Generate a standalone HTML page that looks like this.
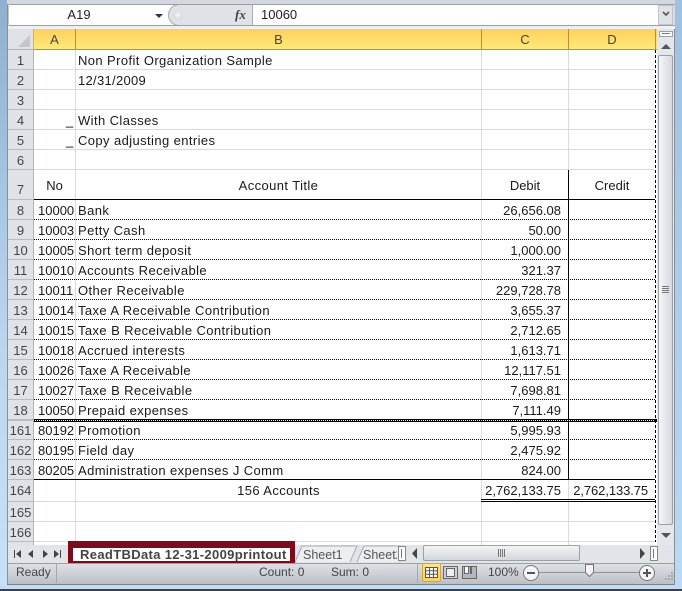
<!DOCTYPE html>
<html><head><meta charset="utf-8"><style>
html,body{margin:0;padding:0;background:#fff}
#p{position:relative;width:682px;height:591px;overflow:hidden;background:#d9dde3;font-family:"Liberation Sans",sans-serif;font-size:13px;color:#1a1a1a}
#p div{position:absolute;box-sizing:border-box}
.t{white-space:nowrap;line-height:20px;height:20px}
.r{text-align:right}
.c{text-align:center}
.b{letter-spacing:.4px}
.n{left:8px;width:25px;text-align:center;color:#444;white-space:nowrap;line-height:20px;height:20px}
.h{top:30px;height:20px;text-align:center;line-height:20px;color:#444}
</style></head><body><div id="p">
<!-- window frame -->
<div style="left:0;top:0;width:7px;height:591px;background:linear-gradient(#8fb0d0,#bcd6f0 60%,#c8e0f8)"></div>
<div style="left:675px;top:0;width:7px;height:591px;background:linear-gradient(#9fc0e0,#bcd9f5)"></div>
<div style="left:7px;top:0;width:668px;height:4px;background:#d4d8de"></div>
<div style="left:7px;top:4px;width:668px;height:1px;background:#9aa0a6"></div>
<!-- formula bar -->
<div style="left:9px;top:5px;width:664px;height:20px;background:#fff"></div>
<div class="t c" style="left:9px;top:5px;width:140px;color:#222">A19</div>
<div style="left:155px;top:14px;width:0;height:0;border-left:4px solid transparent;border-right:4px solid transparent;border-top:4px solid #333"></div>
<div style="left:168px;top:4px;width:85px;height:22px;background:#dfe3e8;border-radius:11px 0 0 11px;border-left:1px solid #a5a9ae;border-top:1px solid #9aa0a6;border-bottom:1px solid #9aa0a6;border-right:1px solid #a9adb2"></div>
<div style="left:173px;top:10px;width:10px;height:10px;border-radius:5px;background:radial-gradient(#f4f5f7,#c9ccd1)"></div>
<div class="t" style="left:235px;top:5px;font:italic bold 13px 'Liberation Serif',serif;line-height:20px;color:#444">fx</div>
<div class="t" style="left:261px;top:5px;color:#222">10060</div>
<div style="left:658px;top:5px;width:15px;height:20px;background:#dfe3e8;border:1px solid #c0c4c9"></div>
<svg style="position:absolute;left:662px;top:11px" width="8" height="6"><path d="M1 1l3 3 3-3" fill="none" stroke="#555" stroke-width="1.6"/></svg>
<div style="left:7px;top:25px;width:668px;height:1px;background:#9aa0a6"></div>
<div style="left:7px;top:26px;width:668px;height:3px;background:#eef0f3"></div>
<div style="left:7px;top:4px;width:2px;height:22px;background:#c6cad0"></div>
<!-- grid background -->
<div style="left:8px;top:29px;width:649px;height:516px;background:#fff"></div>
<div style="left:7px;top:4px;width:1px;height:580px;background:#8a8f96"></div>
<!-- row header -->
<div style="left:8px;top:50px;width:26px;height:495px;background:#dfe3e8"></div>
<div style="left:33px;top:50px;width:1px;height:495px;background:#b0b4ba"></div>
<div style="left:8px;top:29px;width:26px;height:21px;background:#dfe3e8;border-bottom:1px solid #b0b4ba;border-right:1px solid #b0b4ba"></div>
<svg style="position:absolute;left:18px;top:35px" width="12" height="12"><path d="M12 0v12H0z" fill="#c2c6cb"/></svg>
<!-- col header -->
<div style="left:34px;top:29px;width:623px;height:21px;background:linear-gradient(#fdd05e,#ffea78);border-bottom:1px solid #c28e2c"></div>
<div style="left:75px;top:29px;width:1px;height:21px;background:#c28e2c"></div>
<div style="left:481px;top:29px;width:1px;height:21px;background:#c28e2c"></div>
<div style="left:568px;top:29px;width:1px;height:21px;background:#c28e2c"></div>
<div style="left:655px;top:29px;width:1px;height:21px;background:#c28e2c"></div>
<!-- svg grid lines -->
<svg style="position:absolute;left:0;top:0" width="682" height="591">
<g fill="#b8bcc2">
<rect x="8" y="69" width="25" height="1"/><rect x="8" y="89" width="25" height="1"/><rect x="8" y="109" width="25" height="1"/><rect x="8" y="129" width="25" height="1"/><rect x="8" y="149" width="25" height="1"/><rect x="8" y="169" width="25" height="1"/><rect x="8" y="199" width="25" height="1"/><rect x="8" y="219" width="25" height="1"/><rect x="8" y="239" width="25" height="1"/><rect x="8" y="259" width="25" height="1"/><rect x="8" y="279" width="25" height="1"/><rect x="8" y="299" width="25" height="1"/><rect x="8" y="319" width="25" height="1"/><rect x="8" y="339" width="25" height="1"/><rect x="8" y="359" width="25" height="1"/><rect x="8" y="379" width="25" height="1"/><rect x="8" y="399" width="25" height="1"/><rect x="8" y="419" width="25" height="2"/><rect x="8" y="439" width="25" height="1"/><rect x="8" y="459" width="25" height="1"/><rect x="8" y="479" width="25" height="1"/><rect x="8" y="501" width="25" height="1"/><rect x="8" y="521" width="25" height="1"/><rect x="8" y="541" width="25" height="1"/>
</g>
<g fill="#d9d9d9">
<rect x="34" y="69" width="621" height="1"/><rect x="34" y="89" width="621" height="1"/><rect x="34" y="109" width="621" height="1"/><rect x="34" y="129" width="621" height="1"/><rect x="34" y="149" width="621" height="1"/><rect x="34" y="169" width="621" height="1"/><rect x="34" y="501" width="621" height="1"/><rect x="34" y="521" width="621" height="1"/><rect x="34" y="541" width="621" height="1"/>
<rect x="75" y="50" width="1" height="495"/><rect x="481" y="50" width="1" height="495"/><rect x="568" y="50" width="1" height="495"/>
</g>
<g stroke="#000" stroke-width="1" stroke-dasharray="1 1" fill="none">
<path d="M34 219.5H655M34 239.5H655M34 259.5H655M34 279.5H655M34 299.5H655M34 319.5H655M34 339.5H655M34 359.5H655M34 379.5H655M34 399.5H655M34 439.5H655M34 459.5H655"/>
<path d="M34 420.5H657"/>
</g>
<g fill="#000">
<rect x="34" y="199" width="621" height="1"/>
<rect x="34" y="419" width="623" height="1"/>
<rect x="34" y="421" width="623" height="1"/>
<rect x="34" y="479" width="621" height="1"/>
<rect x="568" y="170" width="1" height="310"/>
<rect x="481" y="499" width="174" height="1"/>
<rect x="481" y="501" width="174" height="1"/>
</g>
<path d="M655.5 50V542" stroke="#000" stroke-width="1" stroke-dasharray="3 2" fill="none"/>
</svg>
<!-- grid text, shifted down 1px -->
<div style="left:0;top:1px;width:682px;height:545px">
<div class="h" style="left:34px;top:29px;width:41px">A</div>
<div class="h" style="left:76px;top:29px;width:405px">B</div>
<div class="h" style="left:482px;top:29px;width:86px">C</div>
<div class="h" style="left:569px;top:29px;width:86px">D</div>
<div class="n" style="top:50px">1</div><div class="n" style="top:70px">2</div><div class="n" style="top:90px">3</div><div class="n" style="top:110px">4</div><div class="n" style="top:130px">5</div><div class="n" style="top:150px">6</div><div class="n" style="top:179px">7</div><div class="n" style="top:200px">8</div><div class="n" style="top:220px">9</div><div class="n" style="top:240px">10</div><div class="n" style="top:260px">11</div><div class="n" style="top:280px">12</div><div class="n" style="top:300px">13</div><div class="n" style="top:320px">14</div><div class="n" style="top:340px">15</div><div class="n" style="top:360px">16</div><div class="n" style="top:380px">17</div><div class="n" style="top:400px">18</div><div class="n" style="top:420px">161</div><div class="n" style="top:440px">162</div><div class="n" style="top:460px">163</div><div class="n" style="top:480px">164</div><div class="n" style="top:502px">165</div><div class="n" style="top:522px">166</div>
<!-- header text -->
<div class="t b" style="left:78px;top:50px">Non Profit Organization Sample</div>
<div class="t" style="left:78px;top:70px;letter-spacing:.3px">12/31/2009</div>
<div class="t" style="left:66px;top:110px;color:#000">_</div>
<div class="t b" style="left:78px;top:110px">With Classes</div>
<div class="t" style="left:66px;top:130px;color:#000">_</div>
<div class="t b" style="left:78px;top:130px">Copy adjusting entries</div>
<div class="t c" style="left:34px;top:175px;width:41px">No</div>
<div class="t c b" style="left:76px;top:175px;width:405px">Account Title</div>
<div class="t c" style="left:482px;top:175px;width:86px">Debit</div>
<div class="t c" style="left:569px;top:175px;width:86px">Credit</div>
<!-- data -->
<div class="t" style="left:38px;top:200px">10000</div><div class="t b" style="left:78px;top:200px">Bank</div><div class="t r" style="left:482px;top:200px;width:79px">26,656.08</div>
<div class="t" style="left:38px;top:220px">10003</div><div class="t b" style="left:78px;top:220px">Petty Cash</div><div class="t r" style="left:482px;top:220px;width:79px">50.00</div>
<div class="t" style="left:38px;top:240px">10005</div><div class="t b" style="left:78px;top:240px">Short term deposit</div><div class="t r" style="left:482px;top:240px;width:79px">1,000.00</div>
<div class="t" style="left:38px;top:260px">10010</div><div class="t b" style="left:78px;top:260px">Accounts Receivable</div><div class="t r" style="left:482px;top:260px;width:79px">321.37</div>
<div class="t" style="left:38px;top:280px">10011</div><div class="t b" style="left:78px;top:280px">Other Receivable</div><div class="t r" style="left:482px;top:280px;width:79px">229,728.78</div>
<div class="t" style="left:38px;top:300px">10014</div><div class="t b" style="left:78px;top:300px">Taxe A Receivable Contribution</div><div class="t r" style="left:482px;top:300px;width:79px">3,655.37</div>
<div class="t" style="left:38px;top:320px">10015</div><div class="t b" style="left:78px;top:320px">Taxe B Receivable Contribution</div><div class="t r" style="left:482px;top:320px;width:79px">2,712.65</div>
<div class="t" style="left:38px;top:340px">10018</div><div class="t b" style="left:78px;top:340px">Accrued interests</div><div class="t r" style="left:482px;top:340px;width:79px">1,613.71</div>
<div class="t" style="left:38px;top:360px">10026</div><div class="t b" style="left:78px;top:360px">Taxe A Receivable</div><div class="t r" style="left:482px;top:360px;width:79px">12,117.51</div>
<div class="t" style="left:38px;top:380px">10027</div><div class="t b" style="left:78px;top:380px">Taxe B Receivable</div><div class="t r" style="left:482px;top:380px;width:79px">7,698.81</div>
<div class="t" style="left:38px;top:400px">10050</div><div class="t b" style="left:78px;top:400px">Prepaid expenses</div><div class="t r" style="left:482px;top:400px;width:79px">7,111.49</div>
<div class="t" style="left:38px;top:420px">80192</div><div class="t b" style="left:78px;top:420px">Promotion</div><div class="t r" style="left:482px;top:420px;width:79px">5,995.93</div>
<div class="t" style="left:38px;top:440px">80195</div><div class="t b" style="left:78px;top:440px">Field day</div><div class="t r" style="left:482px;top:440px;width:79px">2,475.92</div>
<div class="t" style="left:38px;top:460px">80205</div><div class="t b" style="left:78px;top:460px">Administration expenses J Comm</div><div class="t r" style="left:482px;top:460px;width:79px">824.00</div>
<div class="t c b" style="left:76px;top:480px;width:405px">156 Accounts</div>
<div class="t r" style="left:482px;top:480px;width:79px">2,762,133.75</div>
<div class="t r" style="left:569px;top:480px;width:79px;letter-spacing:-.1px">2,762,133.75</div>
</div>
<!-- vertical scrollbar -->
<div style="left:657px;top:29px;width:18px;height:516px;background:#e3e6ea"></div>
<div style="left:659px;top:31px;width:14px;height:6px;background:#fff;border:1px solid #9aa0a6"></div>
<div style="left:662px;top:33px;width:8px;height:1px;background:#777"></div>
<svg style="position:absolute;left:660px;top:42px" width="12" height="8"><path d="M1 7L6 2l5 5z" fill="#555"/></svg>
<svg style="position:absolute;left:660px;top:532px" width="12" height="8"><path d="M1 1l5 5 5-5z" fill="#555"/></svg>
<div style="left:658px;top:55px;width:15px;height:470px;background:linear-gradient(90deg,#f4f5f7,#d5d9df);border:1px solid #9aa0a6;border-radius:2px"></div>
<div style="left:662px;top:286px;width:7px;height:7px;background:repeating-linear-gradient(#777 0 1px,transparent 1px 2px)"></div>
<!-- tab row -->
<div style="left:8px;top:545px;width:667px;height:18px;background:#e1e5ea"></div>
<svg style="position:absolute;left:12px;top:549px" width="56" height="12" fill="#444"><rect x="2" y="1" width="1" height="8"/><path d="M9 1v8L4 5zM21 1v8l-5-4zM31 1v8l5-4zM42 1v8l5-4z"/><rect x="48" y="1" width="1" height="8"/></svg>
<!-- active tab -->
<div style="left:68px;top:541px;width:227px;height:24px;border:5px solid #7f0a1c;border-top-width:7px;border-bottom-width:4px;background:#fff"></div>
<div class="t" style="left:80px;top:545px;font-weight:bold;font-size:13px;letter-spacing:.35px;color:#444">ReadTBData 12-31-2009printout</div>
<svg style="position:absolute;left:295px;top:545px" width="110" height="18"><path d="M0 17L7 1H62L55 17M62 17L69 1H105V17" fill="#eceef1" stroke="#a8adb3"/></svg>
<div class="t" style="left:303px;top:545px;color:#555;font-size:12.5px">Sheet1</div>
<div class="t" style="left:363px;top:545px;width:34px;overflow:hidden;color:#555;font-size:12.5px">Sheet2</div>
<div style="left:398px;top:546px;width:8px;height:15px;background:#fff;border:1px solid #888"></div>
<div style="left:401px;top:549px;width:1px;height:9px;background:#777"></div>
<svg style="position:absolute;left:411px;top:548px" width="8" height="11"><path d="M6 0v11L1 5.5z" fill="#444"/></svg>
<div style="left:423px;top:545px;width:157px;height:16px;background:linear-gradient(#f2f4f6,#d3d7dd);border:1px solid #9aa0a6;border-radius:2px"></div>
<div style="left:498px;top:549px;width:7px;height:8px;background:repeating-linear-gradient(90deg,#777 0 1px,transparent 1px 2px)"></div>
<svg style="position:absolute;left:638px;top:548px" width="8" height="11"><path d="M2 0v11l5-5.5z" fill="#444"/></svg>
<div style="left:650px;top:546px;width:8px;height:15px;background:#fff;border:1px solid #888"></div>
<div style="left:653px;top:549px;width:1px;height:9px;background:#777"></div>
<!-- status bar -->
<div style="left:8px;top:563px;width:667px;height:21px;background:linear-gradient(#dde0e5,#bcc0c6);border-top:1px solid #9aa0a6"></div>
<div class="t" style="left:16px;top:562px;font-size:12px;color:#444">Ready</div>
<div style="left:56px;top:564px;width:1px;height:19px;background:#a5a9ae"></div>
<div class="t" style="left:259px;top:562px;font-size:12px;color:#444">Count: 0</div>
<div class="t" style="left:331px;top:562px;font-size:12px;color:#444">Sum: 0</div>
<div style="left:417px;top:564px;width:1px;height:19px;background:#a5a9ae"></div>
<div style="left:422px;top:563px;width:19px;height:19px;background:linear-gradient(#fde68a,#fdd05e);border:1px solid #d9a53a;border-radius:2px"></div>
<svg style="position:absolute;left:425px;top:567px" width="13" height="11"><path d="M.5.5h12v10H.5zM.5 3.8h12M.5 7.2h12M4.5.5v10M8.5.5v10" fill="#fff" stroke="#555"/></svg>
<svg style="position:absolute;left:443px;top:566px" width="15" height="13"><rect x=".5" y=".5" width="14" height="12" fill="#ccd0d5" stroke="#666"/><rect x="3.5" y="2.5" width="8" height="8" fill="#eee" stroke="#666"/></svg>
<svg style="position:absolute;left:462px;top:566px" width="15" height="13"><rect x=".5" y=".5" width="14" height="12" fill="#b5b9bf" stroke="#666"/><rect x="2.5" y=".5" width="4" height="7" fill="#fff" stroke="#666"/><rect x="8.5" y=".5" width="1" height="7" fill="#fff" stroke="#666"/></svg>
<div class="t" style="left:488px;top:562px;font-size:12px;color:#444">100%</div>
<div style="left:538px;top:572px;width:110px;height:1px;background:#8e9298"></div>
<div style="left:523px;top:565px;width:16px;height:16px;border-radius:8px;background:#f4f5f7;border:1px solid #777"></div>
<div style="left:527px;top:572px;width:8px;height:2px;background:#555"></div>
<div style="left:639px;top:565px;width:16px;height:16px;border-radius:8px;background:#f4f5f7;border:1px solid #777"></div>
<div style="left:643px;top:572px;width:8px;height:2px;background:#555"></div>
<div style="left:646px;top:569px;width:2px;height:8px;background:#555"></div>
<svg style="position:absolute;left:585px;top:564px" width="9" height="14"><path d="M.5.5h8v8l-4 4-4-4z" fill="#f2f3f5" stroke="#777"/></svg>
<svg style="position:absolute;left:663px;top:572px" width="11" height="11" fill="#a5a9ae"><rect x="8" y="0" width="2" height="2"/><rect x="5" y="3" width="2" height="2"/><rect x="8" y="3" width="2" height="2"/><rect x="2" y="6" width="2" height="2"/><rect x="5" y="6" width="2" height="2"/><rect x="8" y="6" width="2" height="2"/></svg>
<!-- bottom frame -->
<div style="left:7px;top:584px;width:668px;height:1px;background:#7d8188"></div>
<div style="left:0;top:585px;width:682px;height:4px;background:#c2dcf6"></div>
<div style="left:0;top:589px;width:682px;height:2px;background:#3b3f46"></div>
<div style="left:674px;top:29px;width:1px;height:556px;background:#8a8f96"></div>
</div></body></html>
